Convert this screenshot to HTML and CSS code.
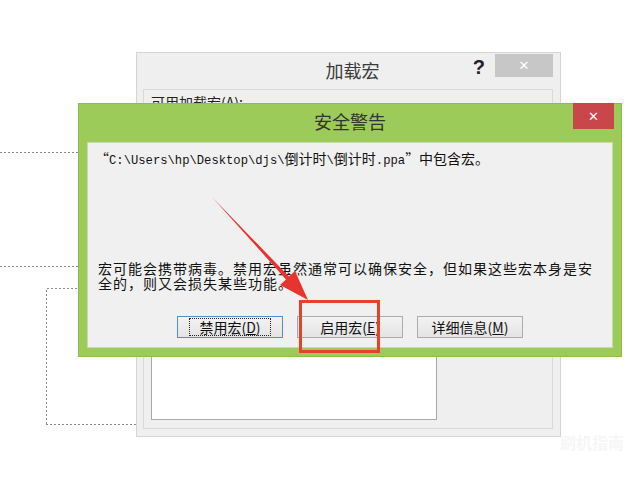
FILE: index.html
```html
<!DOCTYPE html>
<html>

<head>
    <title>安全警告</title>
    <link rel="stylesheet" href="styles.css">
</head>

<body>
    <div class="desktop">

        <!-- dotted guide lines behind the windows -->
        <svg class="guides" width="640" height="485">
            <path d="M0 152.5H80M0 266.5H80M46.5 424V288.5H80M46 424.5H140" fill="none" stroke="#8a8a8a"
                stroke-width="1" stroke-dasharray="2 2" />
        </svg>

        <!-- back window: 加载宏 -->
        <div class="win addins">
            <div class="titlebar">
                <span></span>
                <span class="title">加载宏</span>
                <div class="controls">
                    <span class="help">?</span>
                    <span class="close grey">&#x2715;</span>
                </div>
            </div>
            <div class="frame">
                <div class="frame-label">可用加载宏(<u>A</u>):</div>
                <div class="list"></div>
            </div>
        </div>

        <!-- front window: 安全警告 -->
        <div class="win warning">
            <div class="titlebar">
                <span></span>
                <span class="title">安全警告</span>
                <div class="controls">
                    <span class="close red">&#x2715;</span>
                </div>
            </div>
            <div class="panel">
                <div class="path-line">“<span class="mono">C:\Users\hp\Desktop\djs\</span>倒计时<span class="mono">\</span>倒计时<span class="mono">.ppa</span>”中包含宏。</div>
                <p class="notice">宏可能会携带病毒。禁用宏虽然通常可以确保安全，但如果这些宏本身是安全的，则又会损失某些功能。</p>
                <div class="buttons">
                    <button class="btn focused"><span>禁用宏(<u>D</u>)</span></button>
                    <button class="btn">启用宏(<u>E</u>)</button>
                    <button class="btn">详细信息(<u>M</u>)</button>
                </div>
            </div>
        </div>

        <!-- annotation drawn over the screenshot -->
        <svg class="marks" width="640" height="485">
            <polygon points="212,197 289,276.5 295,271 308,300 280,285 286,279.5" fill="#e8342e" />
            <rect x="300.5" y="301.5" width="78" height="50" fill="none" stroke="#e8402f" stroke-width="3" />
        </svg>

        <div class="watermark">刷机指南</div>
    </div>
</body>

</html>
```

FILE: styles.css
```css
/* Page */
body {
    margin: 0;
    background: #fff;
    font-family: "Noto Sans CJK SC", "Liberation Sans", sans-serif;
    font-size: 14px;
    color: #111;
}

.desktop {
    position: relative;
    width: 640px;
    height: 485px;
    overflow: hidden;
    background: #fff;
}

.guides,
.marks {
    position: absolute;
    left: 0;
    top: 0;
}

/* Windows */
.win {
    position: absolute;
    display: flex;
    flex-direction: column;
    box-sizing: border-box;
}

.titlebar {
    display: grid;
    grid-template-columns: 1fr auto 1fr;
    align-items: start;
}

.title {
    font-size: 18px;
    color: #3a3a3a;
    line-height: 24px;
}

.controls {
    display: flex;
    justify-content: flex-end;
    align-items: flex-start;
}

.close {
    display: flex;
    align-items: center;
    justify-content: center;
    color: #fff;
    font-size: 13px;
    font-weight: bold;
    font-family: "DejaVu Sans", sans-serif;
}

/* Back window */
.addins {
    left: 136px;
    top: 52px;
    width: 425px;
    height: 385px;
    background: #efefef;
    border: 1px solid #d4d4d4;
}

.addins .titlebar {
    height: 36px;
}

.addins .title {
    margin-top: 5px;
    margin-left: 8px;
}

.addins .help {
    font-family: "Liberation Sans", sans-serif;
    font-weight: bold;
    font-size: 20px;
    line-height: 20px;
    margin-top: 4px;
    margin-right: 10px;
    color: #222;
}

.close.grey {
    width: 58px;
    height: 23px;
    margin-top: 1px;
    margin-right: 7px;
    background: #c7c7c7;
}

.frame {
    flex: 1;
    margin: 0 7px 7px 6px;
    border: 1px solid #d9d9d9;
    padding: 3px 8px 8px 7px;
    display: flex;
    flex-direction: column;
}

.frame-label {
    font-size: 14px;
    line-height: 18px;
    color: #222;
}

.list {
    flex: 1;
    width: 284px;
    margin-top: 5px;
    background: #fff;
    border: 1px solid #a8a8a8;
}

/* Front window */
.warning {
    left: 78px;
    top: 103px;
    width: 544px;
    height: 254px;
    background: #9dcb5a;
    border: 1px solid #8fbd4c;
}

.warning .titlebar {
    height: 38px;
}

.warning .title {
    margin-top: 5px;
    color: #333;
}

.close.red {
    width: 41px;
    height: 26px;
    margin-right: 7px;
    margin-top: -1px;
    background: #c9474a;
}

.panel {
    flex: 1;
    margin: 0 8px 8px 8px;
    background: #f0f0f0;
    border: 1px solid #c9d9b4;
    padding: 5px 11px 9px 10px;
    display: flex;
    flex-direction: column;
}

.path-line {
    margin-left: -3px;
    line-height: 20px;
    color: #111;
}

.mono {
    font-family: "Liberation Mono", monospace;
    font-size: 12.2px;
}

.notice {
    margin: auto 0 0 0;
    width: 500px;
    line-height: 15px;
    letter-spacing: 1px;
    color: #111;
}

.buttons {
    display: flex;
    justify-content: center;
    gap: 14px;
    margin-top: 25px;
    padding-left: 1px;
}

.btn {
    width: 106px;
    height: 22px;
    padding: 0;
    border: 1px solid #acacac;
    background: linear-gradient(#f2f2f2, #e4e4e4);
    font-family: inherit;
    font-size: 14px;
    line-height: 18px;
    color: #111;
}

.btn.focused {
    border-color: #4a8fd4;
}

.btn.focused span {
    display: inline-block;
    outline: 1px dotted #222;
    padding: 0 9px;
    line-height: 16px;
}

.watermark {
    position: absolute;
    left: 560px;
    top: 430px;
    font-size: 16px;
    font-weight: bold;
    color: #f6f6f6;
}
```
